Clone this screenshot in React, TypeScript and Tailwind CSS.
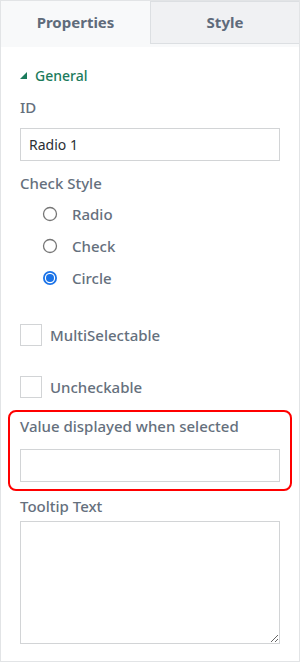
import React, { useState } from 'react';

const font = { fontFamily: '"Noto Sans", "Liberation Sans", sans-serif' };

const RadioDot: React.FC<{ checked: boolean }> = ({ checked }) => (
  <svg width="16" height="16" viewBox="0 0 16 16">
    {checked ? (
      <>
        <circle cx="8" cy="8" r="7" fill="#1a73e8" />
        <circle cx="8" cy="8" r="5.2" fill="#fff" />
        <circle cx="8" cy="8" r="4" fill="#1a73e8" />
      </>
    ) : (
      <circle cx="8" cy="8" r="6.5" fill="#fff" stroke="#767676" strokeWidth="1.3" />
    )}
  </svg>
);

const App: React.FC = () => {
  const [style, setStyle] = useState<string>('Circle');
  const [id, setId] = useState<string>('Radio 1');
  const options = ['Radio', 'Check', 'Circle'];

  return (
    <div
      className="w-[300px] h-[662px] border border-[#e2e4e6] bg-white flex flex-col text-[15px] text-[#65707d] font-medium"
      style={font}
    >
      <div className="flex h-[46px] bg-[#f8f9fa] shrink-0">
        <div className="w-[149px] h-[43px] flex items-center justify-center text-[15px] font-bold text-[#5f6b7b]">
          Properties
        </div>
        <div className="flex-1 h-[43px] flex items-center justify-center bg-[#f0f1f3] border-l border-b border-t border-[#dcdfe2] text-[15px] font-bold text-[#5f6b7b]">
          Style
        </div>
      </div>

      <div className="px-[19px] flex flex-col">
        <div className="mt-[18px] h-[20px] flex items-center gap-[8px] text-[14px] text-[#1b7b5c]">
          <svg width="7" height="7" viewBox="0 0 7 7">
            <polygon points="7,0 7,7 0,7" fill="#1b7b5c" />
          </svg>
          <span>General</span>
        </div>

        <div className="mt-[12px] h-[20px] flex items-center">ID</div>
        <input
          value={id}
          onChange={(e) => setId(e.target.value)}
          className="mt-[11px] h-[33px] w-full border border-[#d2d4d6] px-[8px] text-[14px] text-[#2b2f36] font-normal outline-none"
        />

        <div className="mt-[12px] h-[20px] flex items-center">Check Style</div>
        <div className="mt-[5px] flex flex-col">
          {options.map((o) => (
            <label key={o} className="h-[32px] flex items-center pl-[22px] gap-[14px] cursor-pointer" onClick={() => setStyle(o)}>
              <RadioDot checked={style === o} />
              <span>{o}</span>
            </label>
          ))}
        </div>

        <div className="mt-[30px] h-[22px] flex items-center gap-[8px]">
          <span className="w-[22px] h-[22px] border border-[#d2d4d6] bg-white" />
          <span>MultiSelectable</span>
        </div>
        <div className="mt-[30px] h-[22px] flex items-center gap-[8px]">
          <span className="w-[22px] h-[22px] border border-[#d2d4d6] bg-white" />
          <span>Uncheckable</span>
        </div>

        <div className="mt-[12px] -mx-[12px] h-[81px] border-2 border-[#ff0000] rounded-[8px] px-[10px] pt-[4px] flex flex-col">
          <div className="h-[20px] flex items-center">Value displayed when selected</div>
          <input className="mt-[13px] h-[33px] w-full border border-[#d2d4d6] px-[8px] outline-none" />
        </div>

        <div className="mt-[5px] h-[20px] flex items-center">Tooltip Text</div>
        <textarea className="mt-[5px] h-[123px] w-full border border-[#d2d4d6] outline-none" />
      </div>
    </div>
  );
};

export default App;
